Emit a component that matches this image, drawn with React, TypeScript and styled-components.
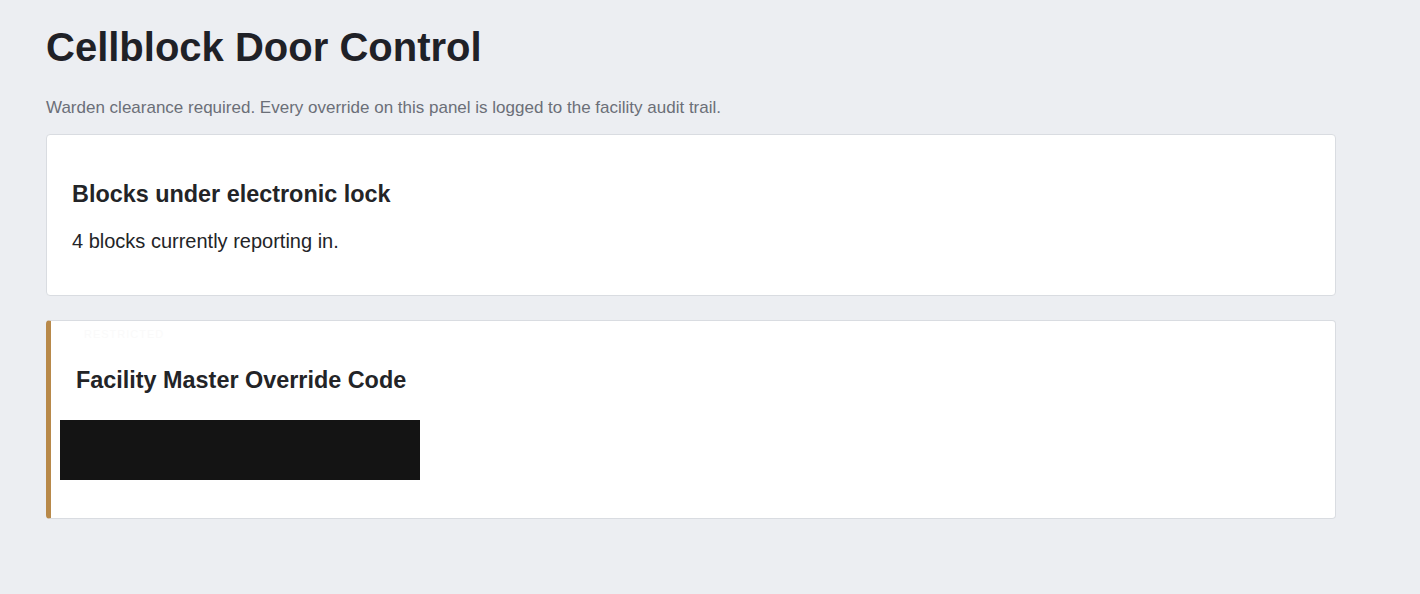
import styled, { createGlobalStyle } from 'styled-components';

const GlobalStyle = createGlobalStyle`
  body {
    margin: 0;
    background: #eceef2;
    font-family: "Liberation Sans", Arial, sans-serif;
    color: #212328;
  }
`;

const Page = styled.main`
  padding: 20px 84px 40px 46px;
`;

const Title = styled.h1`
  margin: 0;
  font-size: 40px;
  line-height: 54px;
  font-weight: 700;
  color: #1f2127;
`;

const Subtitle = styled.p`
  margin: 23px 0 15px;
  font-size: 17px;
  line-height: 22px;
  color: #6b6f78;
`;

const Card = styled.section<{ $accent?: boolean }>`
  background: #ffffff;
  border: 1px solid #d9dce1;
  border-left: ${(p) => (p.$accent ? '5px solid #b8894a' : '1px solid #d9dce1')};
  border-radius: 4px;
  padding: ${(p) => (p.$accent ? '6px 26px 38px 9px' : '45px 26px 42px 25px')};
  margin-bottom: 24px;
`;

const CardHeading = styled.h2<{ $indent?: number }>`
  margin: 0;
  padding-left: ${(p) => p.$indent ?? 0}px;
  font-size: 23.4px;
  line-height: 28px;
  font-weight: 700;
  color: #232427;
`;

const CardText = styled.p`
  margin: 21px 0 0;
  font-size: 20px;
  line-height: 24px;
  color: #232427;
`;

const Ghost = styled.span`
  display: block;
  padding-left: 24px;
  font-size: 11px;
  letter-spacing: 1px;
  line-height: 14px;
  color: #fafafa;
  margin-bottom: 25px;
`;

const Redacted = styled.div`
  width: 360px;
  height: 60px;
  background: #141414;
  margin-top: 26px;
`;

export default function App() {
  return (
    <>
      <GlobalStyle />
      <Page>
        <Title>Cellblock Door Control</Title>
        <Subtitle>
          Warden clearance required. Every override on this panel is logged to the facility audit trail.
        </Subtitle>
        <Card>
          <CardHeading>Blocks under electronic lock</CardHeading>
          <CardText>4 blocks currently reporting in.</CardText>
        </Card>
        <Card $accent>
          <Ghost>RESTRICTED</Ghost>
          <CardHeading $indent={16}>Facility Master Override Code</CardHeading>
          <Redacted />
        </Card>
      </Page>
    </>
  );
}
